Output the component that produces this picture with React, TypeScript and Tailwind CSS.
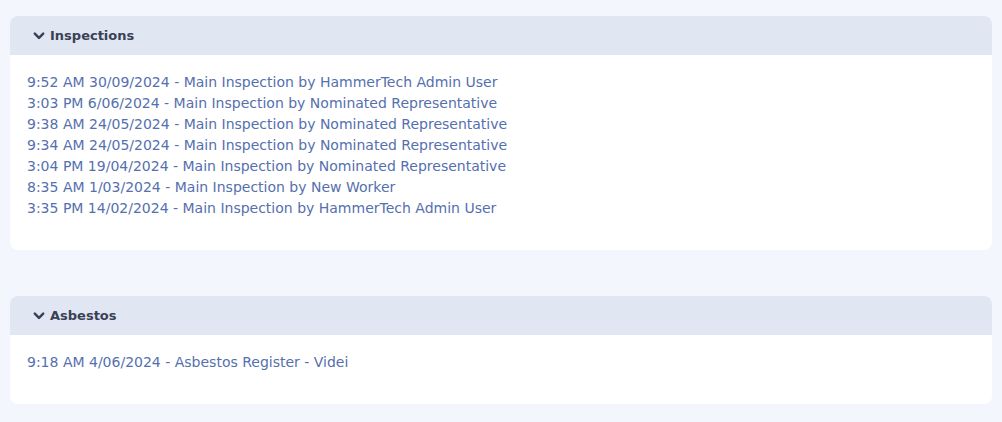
import React from "react";

const inspections = [
  "9:52 AM 30/09/2024 - Main Inspection by HammerTech Admin User",
  "3:03 PM 6/06/2024 - Main Inspection by Nominated Representative",
  "9:38 AM 24/05/2024 - Main Inspection by Nominated Representative",
  "9:34 AM 24/05/2024 - Main Inspection by Nominated Representative",
  "3:04 PM 19/04/2024 - Main Inspection by Nominated Representative",
  "8:35 AM 1/03/2024 - Main Inspection by New Worker",
  "3:35 PM 14/02/2024 - Main Inspection by HammerTech Admin User",
];

function Chevron() {
  return (
    <svg width="12" height="12" viewBox="0 0 12 12" className="shrink-0">
      <path d="M1.8 3.6 L6 7.8 L10.2 3.6" fill="none" stroke="#3a4157" strokeWidth="2.5" strokeLinecap="round" strokeLinejoin="round" />
    </svg>
  );
}

function Section({ title, items, bodyClass }: { title: string; items: string[]; bodyClass: string }) {
  return (
    <div className="rounded-lg bg-white overflow-hidden">
      <div className="h-[39px] bg-[#e1e7f2] flex items-center gap-[5px] pl-[23px]">
        <Chevron />
        <span className="text-[13px] font-bold text-[#3a4157]">{title}</span>
      </div>
      <div className={bodyClass}>
        {items.map((t) => (
          <a key={t} className="block text-[14px] leading-[21px] text-[#5570ae] cursor-pointer">
            {t}
          </a>
        ))}
      </div>
    </div>
  );
}

export default function App() {
  return (
    <div className="w-[1002px] h-[422px] bg-[#f3f6fd] pt-4 px-[10px] flex flex-col gap-[46px]" style={{ fontFamily: '"DejaVu Sans", sans-serif' }}>
      <Section title="Inspections" items={inspections} bodyClass="pl-[17px] pt-[17px] pb-[31px]" />
      <Section title="Asbestos" items={["9:18 AM 4/06/2024 - Asbestos Register - Videi"]} bodyClass="pl-[17px] pt-[17px] pb-[31px]" />
    </div>
  );
}
